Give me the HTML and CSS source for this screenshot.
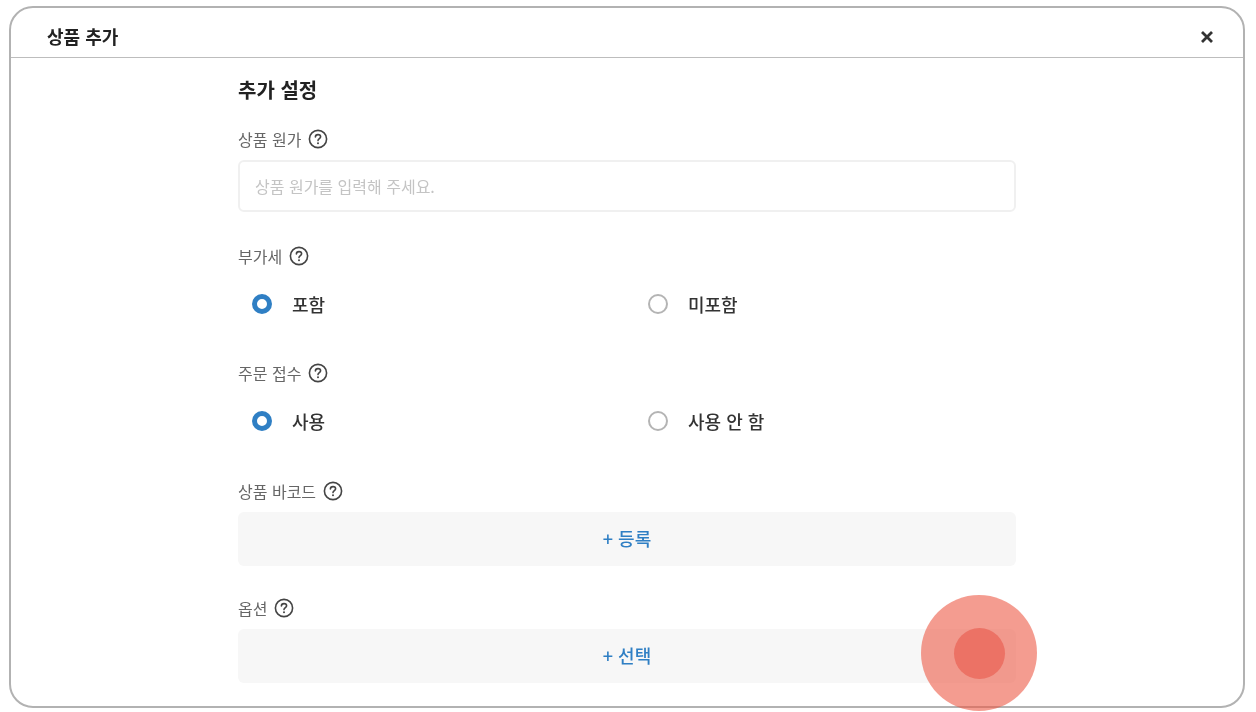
FILE: index.html
```html
<!DOCTYPE html>
<html lang="ko">
  <head>
    <meta charset="UTF-8" />
    <meta name="viewport" content="width=device-width, initial-scale=1.0" />
    <title>상품 추가</title>
    <link rel="stylesheet" href="styles.css">
  </head>
  <body>
    <main class="modal">
      <header class="modalHeader">
        <h1>상품 추가</h1>
        <button type="button" class="closeBtn" aria-label="닫기">
          <svg width="14" height="14" viewBox="0 0 14 14"><path d="M2 2 L12 12 M12 2 L2 12" /></svg>
        </button>
      </header>

      <form class="form">
        <h2>추가 설정</h2>

        <div class="field fieldFirst">
          <label class="fieldLabel">상품 원가
            <svg class="help" width="20" height="20" viewBox="0 0 20 20"><circle cx="10" cy="10" r="8.6" /><path d="M7.4 8 C7.4 6.4 8.6 5.6 10 5.6 C11.5 5.6 12.6 6.5 12.6 7.8 C12.6 9.5 10 9.7 10 11.6" /><circle class="dot" cx="10" cy="14.2" r="1" /></svg>
          </label>
          <input type="text" class="textInput" placeholder="상품 원가를 입력해 주세요." />
        </div>

        <div class="field">
          <label class="fieldLabel">부가세
            <svg class="help" width="20" height="20" viewBox="0 0 20 20"><circle cx="10" cy="10" r="8.6" /><path d="M7.4 8 C7.4 6.4 8.6 5.6 10 5.6 C11.5 5.6 12.6 6.5 12.6 7.8 C12.6 9.5 10 9.7 10 11.6" /><circle class="dot" cx="10" cy="14.2" r="1" /></svg>
          </label>
          <div class="radioRow">
            <div class="radio"><span class="mark checked"></span>포함</div>
            <div class="radio"><span class="mark"></span>미포함</div>
          </div>
        </div>

        <div class="field fieldWide">
          <label class="fieldLabel">주문 접수
            <svg class="help" width="20" height="20" viewBox="0 0 20 20"><circle cx="10" cy="10" r="8.6" /><path d="M7.4 8 C7.4 6.4 8.6 5.6 10 5.6 C11.5 5.6 12.6 6.5 12.6 7.8 C12.6 9.5 10 9.7 10 11.6" /><circle class="dot" cx="10" cy="14.2" r="1" /></svg>
          </label>
          <div class="radioRow">
            <div class="radio"><span class="mark checked"></span>사용</div>
            <div class="radio"><span class="mark"></span>사용 안 함</div>
          </div>
        </div>

        <div class="field fieldBarcode">
          <label class="fieldLabel">상품 바코드
            <svg class="help" width="20" height="20" viewBox="0 0 20 20"><circle cx="10" cy="10" r="8.6" /><path d="M7.4 8 C7.4 6.4 8.6 5.6 10 5.6 C11.5 5.6 12.6 6.5 12.6 7.8 C12.6 9.5 10 9.7 10 11.6" /><circle class="dot" cx="10" cy="14.2" r="1" /></svg>
          </label>
          <button type="button" class="addBtn">+ 등록</button>
        </div>

        <div class="field fieldNarrow">
          <label class="fieldLabel">옵션
            <svg class="help" width="20" height="20" viewBox="0 0 20 20"><circle cx="10" cy="10" r="8.6" /><path d="M7.4 8 C7.4 6.4 8.6 5.6 10 5.6 C11.5 5.6 12.6 6.5 12.6 7.8 C12.6 9.5 10 9.7 10 11.6" /><circle class="dot" cx="10" cy="14.2" r="1" /></svg>
          </label>
          <button type="button" class="addBtn">+ 선택</button>
        </div>
      </form>
    </main>

    <div class="tap"><div class="tapCore"></div></div>
  </body>
</html>
```

FILE: styles.css
```css
* {
  margin: 0;
  padding: 0;
  box-sizing: border-box;
}

html,
body {
  height: 712px;
  overflow: hidden;
}

body {
  position: relative;
  background-color: white;
  color: #222;
  font-family: "Noto Sans CJK KR", "Noto Sans", sans-serif;
  padding: 6px 11px 4px 9px;
}

.modal {
  height: 702px;
  border: 2px solid #b2b2b2;
  border-radius: 24px;
  overflow: hidden;
  background-color: white;
}

.modalHeader {
  height: 50px;
  padding: 6px 29px 0 36px;
  border-bottom: 1px solid #bdbdbd;
  display: flex;
  align-items: center;
  justify-content: space-between;
}

.modalHeader h1 {
  font-size: 18px;
  font-weight: 700;
  line-height: 26px;
  filter: blur(0.5px);
}

.closeBtn {
  border: none;
  background: none;
  width: 14px;
  height: 14px;
  margin-top: 3px;
  display: flex;
  filter: blur(0.5px);
}

.closeBtn path {
  fill: none;
  stroke: #333;
  stroke-width: 2.8;
}

.form {
  width: 778px;
  margin-left: 227px;
  padding-top: 19px;
  filter: blur(0.6px);
}

.form h2 {
  font-size: 20px;
  font-weight: 700;
  line-height: 26px;
}

.field {
  margin-top: 32px;
}

.fieldFirst {
  margin-top: 24px;
}

.fieldWide {
  margin-top: 37px;
}

.fieldBarcode {
  margin-top: 38px;
}

.fieldNarrow {
  margin-top: 30px;
}

.fieldLabel {
  display: flex;
  align-items: center;
  gap: 7px;
  height: 24px;
  font-size: 16px;
  color: #666;
}

.help circle {
  fill: none;
  stroke: #444;
  stroke-width: 1.6;
}

.help path {
  fill: none;
  stroke: #444;
  stroke-width: 1.6;
  stroke-linecap: round;
}

.help .dot {
  fill: #444;
  stroke: none;
}

.textInput {
  display: block;
  width: 100%;
  height: 52px;
  margin-top: 9px;
  padding: 0 15px;
  border: 2px solid #f0f0f0;
  border-radius: 6px;
  outline: none;
  font-family: inherit;
  font-size: 16px;
}

.textInput::placeholder {
  color: #c4c4c4;
}

.radioRow {
  display: grid;
  grid-template-columns: 1fr 1fr;
  column-gap: 14px;
  margin-top: 16px;
}

.radio {
  height: 40px;
  padding-left: 14px;
  display: flex;
  align-items: center;
  gap: 20px;
  font-size: 18px;
  font-weight: 500;
  color: #333;
}

.mark {
  width: 20px;
  height: 20px;
  border: 2px solid #b4b4b4;
  border-radius: 50%;
  background-color: white;
}

.mark.checked {
  border: 5.5px solid #2f7fc4;
}

.addBtn {
  display: block;
  width: 100%;
  height: 54px;
  margin-top: 9px;
  padding-bottom: 2px;
  border: none;
  border-radius: 6px;
  background-color: #f7f7f7;
  color: #2f7fc4;
  font-family: inherit;
  font-size: 18px;
  font-weight: 500;
}

/* tap marker over the page */
.tap {
  position: absolute;
  left: 921px;
  top: 595px;
  width: 116px;
  height: 116px;
  border-radius: 50%;
  background-color: rgba(236, 90, 70, 0.6);
  display: flex;
  align-items: center;
  justify-content: center;
}

.tapCore {
  width: 51px;
  height: 51px;
  border-radius: 50%;
  background-color: #ec7265;
}
```
